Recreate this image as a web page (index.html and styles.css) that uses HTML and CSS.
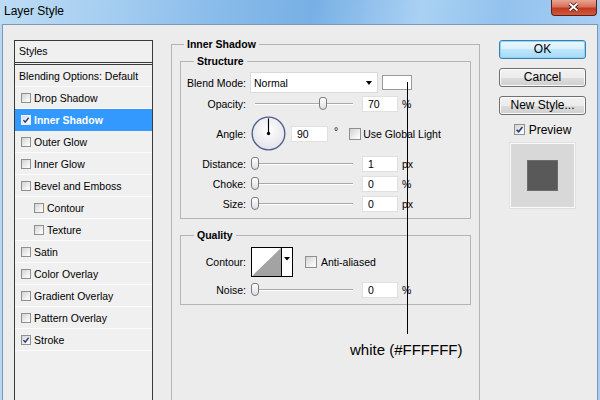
FILE: index.html
```html
<!DOCTYPE html>
<html lang="en">
<head>
  <meta charset="UTF-8" />
  <meta name="viewport" content="width=device-width, initial-scale=1.0"/>
  <title>Layer Style</title>
  <link rel="stylesheet" href="styles.css">
</head>
<body>

<div class="window">
  <div class="titlebar">
    <span class="title">Layer Style</span>
    <span class="close">
      <svg viewBox="0 0 46 15" width="46" height="15">
        <path class="x-edge" d="M19 3.5 27 10.5M27 3.5 19 10.5"/>
        <path class="x-core" d="M19 3.5 27 10.5M27 3.5 19 10.5"/>
      </svg>
    </span>
  </div>

  <div class="client">
    <!-- left list of effects -->
    <div class="styles-list">
      <div class="list-head">Styles</div>
      <div class="row plain">Blending Options: Default</div>
      <div class="row"><span class="cb"></span>Drop Shadow</div>
      <div class="row selected"><span class="cb"><svg viewBox="0 0 10 10"><path d="M1.8 5.2 4 7.6 8.3 2.2"/></svg></span>Inner Shadow</div>
      <div class="row"><span class="cb"></span>Outer Glow</div>
      <div class="row"><span class="cb"></span>Inner Glow</div>
      <div class="row"><span class="cb"></span>Bevel and Emboss</div>
      <div class="row indent"><span class="cb"></span>Contour</div>
      <div class="row indent"><span class="cb"></span>Texture</div>
      <div class="row"><span class="cb"></span>Satin</div>
      <div class="row"><span class="cb"></span>Color Overlay</div>
      <div class="row"><span class="cb"></span>Gradient Overlay</div>
      <div class="row"><span class="cb"></span>Pattern Overlay</div>
      <div class="row"><span class="cb"><svg viewBox="0 0 10 10"><path d="M1.8 5.2 4 7.6 8.3 2.2"/></svg></span>Stroke</div>
    </div>

    <!-- settings -->
    <div class="main">
      <fieldset class="group outer">
        <legend>Inner Shadow</legend>

        <fieldset class="group inner structure">
          <legend>Structure</legend>

          <div class="field f-blend">
            <label>Blend Mode:</label>
            <div class="select">Normal<span class="arrow"></span></div>
            <span class="swatch"></span>
          </div>

          <div class="field f-opacity">
            <label>Opacity:</label>
            <div class="slider"><span class="track"></span><span class="thumb" style="left:68px"></span></div>
            <span class="num">70</span>
            <span class="unit">%</span>
          </div>

          <div class="field f-angle">
            <label>Angle:</label>
            <svg class="dial" viewBox="0 0 36 36" width="35" height="35">
              <defs>
                <radialGradient id="dialFill" cx="50%" cy="40%" r="60%">
                  <stop offset="0" stop-color="#ffffff"/>
                  <stop offset="1" stop-color="#e2e3ea"/>
                </radialGradient>
              </defs>
              <circle cx="18" cy="18" r="16.8" fill="url(#dialFill)" stroke="#4e5d8a" stroke-width="1.4"/>
              <line x1="18" y1="18" x2="18" y2="2.5" stroke="#000" stroke-width="1.2"/>
              <circle cx="18" cy="18" r="1.7" fill="#000"/>
            </svg>
            <span class="num angle-num">90</span>
            <span class="deg">°</span>
            <span class="cb big"></span>
            <span>Use Global Light</span>
          </div>

          <div class="field f-first">
            <label>Distance:</label>
            <div class="slider"><span class="track"></span><span class="thumb" style="left:0"></span></div>
            <span class="num">1</span>
            <span class="unit">px</span>
          </div>

          <div class="field">
            <label>Choke:</label>
            <div class="slider"><span class="track"></span><span class="thumb" style="left:0"></span></div>
            <span class="num">0</span>
            <span class="unit">%</span>
          </div>

          <div class="field">
            <label>Size:</label>
            <div class="slider"><span class="track"></span><span class="thumb" style="left:0"></span></div>
            <span class="num">0</span>
            <span class="unit">px</span>
          </div>
        </fieldset>

        <fieldset class="group inner quality">
          <legend>Quality</legend>

          <div class="field f-contour">
            <label>Contour:</label>
            <svg class="contour" viewBox="0 0 42 30" width="42" height="30">
              <rect x="0.5" y="0.5" width="41" height="29" fill="#fff" stroke="#000"/>
              <polygon points="1,29 30,1 30,29" fill="#a3a3a3"/>
              <line x1="30.5" y1="0" x2="30.5" y2="30" stroke="#000"/>
              <polygon points="33,10 39,10 36,13.5" fill="#000"/>
            </svg>
            <span class="cb big aa"></span>
            <span>Anti-aliased</span>
          </div>

          <div class="field f-noise">
            <label>Noise:</label>
            <div class="slider"><span class="track"></span><span class="thumb" style="left:0"></span></div>
            <span class="num">0</span>
            <span class="unit">%</span>
          </div>
        </fieldset>
      </fieldset>
    </div>

    <!-- buttons and preview -->
    <div class="actions">
      <div class="btn default">OK</div>
      <div class="btn">Cancel</div>
      <div class="btn">New Style...</div>
      <div class="preview-check">
        <span class="cb mid"><svg viewBox="0 0 10 10"><path d="M1.8 5.2 4 7.6 8.3 2.2"/></svg></span>Preview
      </div>
      <div class="preview-box"><span class="preview-square"></span></div>
    </div>
  </div>

  <!-- annotation drawn over the dialog -->
  <span class="callout-line"></span>
  <span class="callout-text">white (#FFFFFF)</span>
</div>

</body>
</html>
```

FILE: styles.css
```css
* {
  box-sizing: border-box;
}

body {
  margin: 0;
  width: 600px;
  height: 400px;
  overflow: hidden;
  background: linear-gradient(to right, #b7d7f2, #8fc0ec 50%, #a6cff3);
  font-family: 'Liberation Sans', Arial, sans-serif;
  font-size: 10.5px;
  color: #000;
}

.window {
  position: relative;
  height: 400px;
  overflow: hidden;
}

/* title bar */
.titlebar {
  height: 24px;
  display: flex;
  justify-content: space-between;
  align-items: flex-start;
  background: linear-gradient(100deg, #bddcf4 0%, #a6cef1 18%, #86bae9 38%, #78b0e5 52%, #a9d1f3 70%, #92c2ee 84%, #a8cff2 100%);
}

.title {
  font-size: 12px;
  line-height: 14px;
  margin: 4px 0 0 4px;
}

.close {
  width: 46px;
  height: 16px;
  margin-right: 3px;
  border: 1px solid #5b2118;
  border-top: 0;
  border-radius: 0 0 4px 4px;
  background: linear-gradient(#e8a493, #d8705a 45%, #c03a20 55%, #d25a3c);
  display: flex;
}

.close svg {
  margin-left: -1px;
}

.x-edge {
  stroke: #3d1812;
  stroke-width: 3.6;
  fill: none;
}

.x-core {
  stroke: #fff;
  stroke-width: 2;
  fill: none;
}

/* dialog body */
.client {
  display: flex;
  margin: 0 2px;
  height: 376px;
  padding: 15px 11px 0;
  border: 1px solid #7e97b4;
  border-bottom: 0;
  background: #ececec;
  overflow: hidden;
}

/* styles list */
.styles-list {
  flex-shrink: 0;
  width: 139px;
  height: 362px;
  margin-right: 18px;
  border: 1px solid #3a3a3a;
  border-bottom: 0;
  background: #f0f0f0;
}

.list-head {
  height: 24px;
  line-height: 21px;
  padding-left: 4px;
  border-bottom: 3px double #3a3a3a;
}

.row {
  display: flex;
  align-items: center;
  height: 22px;
  padding-left: 6px;
  border-bottom: 1px solid #fbfbfb;
  white-space: nowrap;
}

.row.plain {
  padding-left: 4px;
}

.row.indent {
  padding-left: 19px;
}

.row.selected {
  background: #3399ff;
  color: #fff;
  font-weight: bold;
  border-bottom-color: #3399ff;
}

/* checkboxes */
.cb {
  flex-shrink: 0;
  display: flex;
  align-items: center;
  justify-content: center;
  width: 10px;
  height: 10px;
  margin-right: 3px;
  border: 1px solid #8f8f8f;
  background: linear-gradient(135deg, #d2d2d2, #f4f4f4 70%, #fff);
}

.cb svg {
  width: 8px;
  height: 8px;
  fill: none;
  stroke: #23377a;
  stroke-width: 1.7;
}

.selected .cb {
  border-color: #e8f2ff;
  background: linear-gradient(135deg, #dcdcdc, #fff);
}

.cb.big {
  width: 12px;
  height: 12px;
  margin-left: 11px;
  margin-right: 2px;
}

.cb.aa {
  margin-left: 12px;
  margin-right: 4px;
}

.cb.mid {
  width: 11px;
  height: 11px;
  margin-right: 4px;
}

.cb.mid svg {
  width: 9px;
  height: 9px;
}

/* group boxes */
.main {
  flex-shrink: 0;
  width: 309px;
  margin-top: -3px;
  margin-right: 19px;
}

.group {
  margin: 0;
  min-width: 0;
  border: 1px solid #b4b4b4;
}

.group legend {
  font-weight: bold;
  line-height: 14px;
  padding: 0 3px;
}

.outer {
  width: 309px;
  height: 366px;
  padding: 0 8px;
  border-bottom: 0;
}

.outer > legend {
  margin-left: 4px;
}

.inner {
  padding: 4px 0 6px;
}

.inner > legend {
  margin-left: 13px;
}

.structure {
  margin-top: 3px;
}

.quality {
  margin-top: 9px;
  padding-top: 5px;
}

/* field rows */
.field {
  display: flex;
  align-items: center;
  height: 16px;
  margin-top: 4px;
  white-space: nowrap;
}

.field label {
  flex-shrink: 0;
  width: 65px;
  text-align: right;
}

.f-blend {
  height: 21px;
  margin-top: 0;
}

.f-opacity {
  margin-top: 3px;
}

.f-angle {
  height: 35px;
}

.f-first {
  margin-top: 5px;
}

.f-contour {
  height: 30px;
  margin-top: 0;
}

.f-noise {
  margin-top: 5px;
}

.select {
  display: flex;
  align-items: center;
  justify-content: space-between;
  width: 128px;
  height: 21px;
  margin-left: 4px;
  padding: 0 5px 0 3px;
  background: #fff;
  border: 1px solid #dadada;
}

.select .arrow {
  border-left: 3px solid transparent;
  border-right: 3px solid transparent;
  border-top: 4px solid #000;
}

.swatch {
  width: 30px;
  height: 15px;
  margin-left: 4px;
  background: #fff;
  border: 1px solid #9a9a9a;
}

.slider {
  position: relative;
  flex-shrink: 0;
  width: 102px;
  height: 16px;
  margin-left: 5px;
}

.slider .track {
  position: absolute;
  left: 4px;
  right: 0;
  top: 7px;
  height: 2px;
  border-top: 1px solid #a9a9a9;
  border-bottom: 1px solid #fff;
}

.slider .thumb {
  position: absolute;
  top: 1px;
  width: 8px;
  height: 13px;
  border: 1px solid #7b7b7b;
  border-radius: 3px 3px 4px 4px;
  background: linear-gradient(#fff, #dedede);
}

.num {
  flex-shrink: 0;
  width: 36px;
  height: 16px;
  margin-left: 9px;
  padding-left: 5px;
  line-height: 14px;
  background: #fff;
  border: 1px solid #e0e0e0;
}

.angle-num {
  width: 37px;
  margin-left: 5px;
}

.unit {
  margin-left: 4px;
}

.deg {
  margin-left: 6px;
  align-self: flex-start;
  margin-top: 9px;
}

.dial {
  flex-shrink: 0;
  margin-left: 5px;
}

.contour {
  flex-shrink: 0;
  margin-left: 5px;
}

/* right column */
.actions {
  flex-shrink: 0;
  display: flex;
  flex-direction: column;
  align-items: center;
  width: 87px;
}

.btn {
  width: 87px;
  height: 19px;
  margin-bottom: 9px;
  border: 1px solid #707070;
  border-radius: 3px;
  background: linear-gradient(#f2f2f2, #ebebeb 50%, #dddddd 50%, #cfcfcf);
  box-shadow: inset 0 0 0 1px #fbfbfb;
  font-size: 12px;
  line-height: 17px;
  text-align: center;
}

.btn.default {
  border-color: #3c7fb1;
  background: linear-gradient(#eaf6fd, #d9f0fc 50%, #bee6fd 50%, #a7d9f5);
  box-shadow: inset 0 0 0 1px #8fd3f7;
}

.preview-check {
  display: flex;
  align-items: center;
  height: 13px;
  margin-top: -1px;
  font-size: 12px;
}

.preview-box {
  display: flex;
  align-items: center;
  justify-content: center;
  width: 65px;
  height: 65px;
  margin-top: 7px;
  background: #d8d8d8;
  border: 1px solid #fafafa;
  box-shadow: 0 0 0 1px #e0e0e0;
}

.preview-square {
  width: 31px;
  height: 31px;
  background: #595959;
  border: 1px solid #6c6c6c;
}

/* annotation */
.callout-line {
  position: absolute;
  left: 407px;
  top: 82px;
  width: 1px;
  height: 252px;
  background: #000;
}

.callout-text {
  position: absolute;
  left: 350px;
  top: 341px;
  font-size: 15px;
  line-height: 17px;
}
```
